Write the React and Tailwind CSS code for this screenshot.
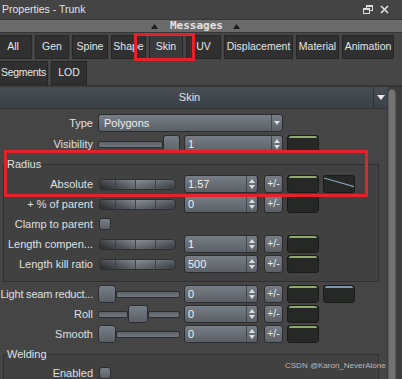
import React from 'react'

const metal = 'border border-[#2a2c2f] bg-linear-to-b from-[#787e85] to-[#5a6066]'

function Tri({ up, color = '#dde0e3', w = 7, h = 4 }) {
  return (
    <svg width={w} height={h} viewBox={`0 0 ${w} ${h}`} className="block shrink-0">
      <path d={up ? `M${w / 2} 0L${w} ${h}H0Z` : `M0 0H${w}L${w / 2} ${h}Z`} fill={color} />
    </svg>
  )
}

function Tab({ w, children, active }) {
  return (
    <div
      className={`flex h-[24px] shrink-0 items-center justify-center whitespace-nowrap border border-[#262626] text-[10.5px] text-[#e4e6e8] ${w} ${
        active ? 'bg-[#3a3a3a]' : 'bg-[#303030]'
      }`}
    >
      {children}
    </div>
  )
}

function Label({ inner, children }) {
  return (
    <div
      className={`flex shrink-0 justify-end whitespace-nowrap text-[11px] text-[#dfe0e1] ${
        inner ? 'w-[89px]' : 'w-[93px]'
      }`}
    >
      {children}
    </div>
  )
}

function NumField({ value, wide }) {
  return (
    <div className={`ml-[4px] flex h-[18px] shrink-0 rounded-[3px] ${metal} ${wide ? 'w-[99px]' : 'w-[74px]'}`}>
      <div className="flex-1 pl-[3px] text-[11px] leading-[16px] text-[#eeeeee]">{value}</div>
      <div className="flex w-[11px] flex-col items-center justify-center gap-[2px] border-l border-[#41464c]">
        <Tri up w={6} h={4} />
        <Tri w={6} h={4} />
      </div>
    </div>
  )
}

function PlusMinus() {
  return (
    <div className={`ml-[6px] flex h-[18px] w-[19px] shrink-0 items-center justify-center rounded-[3px] text-[10.5px] text-[#eeeeee] ${metal}`}>
      +/-
    </div>
  )
}

function Swatch({ top, curve }) {
  return (
    <div className="relative ml-[4px] h-[18px] w-[32px] shrink-0 overflow-hidden rounded-[3px] border border-[#1a1b1a] bg-[#262826]">
      {top && <div className={`mx-[1px] h-[2px] rounded-t-[2px] ${top}`} />}
      {curve && (
        <svg width="32" height="18" viewBox="0 0 32 18" className="absolute left-0 top-0">
          <line x1="0" y1="2" x2="31" y2="11" stroke="#8fa6bc" strokeWidth="1.2" />
        </svg>
      )}
    </div>
  )
}

function Segmented() {
  return (
    <div className="ml-[1px] flex h-[11px] w-[77px] overflow-hidden rounded-[4px] border border-[#2c2f33] bg-linear-to-r from-[#36393d] via-[#7e848b] to-[#4d5258]">
      <div className="w-[16px] border-r border-[#3d4146] bg-linear-to-b from-white/10 to-black/20" />
      <div className="w-[20px] border-r border-[#3d4146] bg-linear-to-b from-white/10 to-black/20" />
      <div className="w-[20px] border-r border-[#3d4146] bg-linear-to-b from-white/10 to-black/20" />
      <div className="flex-1 bg-linear-to-b from-white/10 to-black/20" />
    </div>
  )
}

function Track({ w }) {
  return <div className={`h-[7px] rounded-[2px] border border-[#2a2c2f] bg-linear-to-b from-[#5c6268] to-[#70767d] ${w}`} />
}

function Handle({ w }) {
  return <div className={`h-[18px] shrink-0 rounded-[3px] ${metal} ${w}`} />
}

function Check() {
  return <div className={`ml-[6px] h-[12px] w-[12px] rounded-[3px] ${metal}`} />
}

function SliderRow({ label, inner, slider, value, top, second }) {
  return (
    <div className="flex h-[20px] items-center">
      <Label inner={inner}>{label}</Label>
      <div className="ml-[5px] flex w-[82px] shrink-0 items-center">{slider}</div>
      <NumField value={value} />
      <PlusMinus />
      <Swatch top={top} />
      {second}
    </div>
  )
}

export default function App() {
  return (
    <div className="relative h-[379px] w-[402px] overflow-hidden bg-[#464646] font-['Liberation_Sans',Arial,sans-serif]">
      {/* title bar */}
      <div className="flex h-[19px] items-center bg-[#444444] pl-[2px] pr-[13px]">
        <span className="text-[10.5px] text-[#e2e2e2]">Properties - Trunk</span>
        <div className="ml-auto flex items-center gap-[7px]">
          <svg width="10" height="9" viewBox="0 0 10 9">
            <rect x="3.5" y="0.5" width="6" height="5" fill="none" stroke="#dcdcdc" />
            <rect x="3" y="0" width="7" height="2" fill="#dcdcdc" />
            <rect x="0.5" y="3.5" width="6" height="5" fill="#444" stroke="#dcdcdc" />
            <rect x="0" y="3" width="7" height="2" fill="#dcdcdc" />
          </svg>
          <svg width="9" height="9" viewBox="0 0 9 9">
            <path d="M1 1L8 8M8 1L1 8" stroke="#dcdcdc" strokeWidth="1.7" />
          </svg>
        </div>
      </div>

      {/* messages bar */}
      <div className="flex h-[14px] items-center border-y border-[#363636] bg-[#6b6b6b] pl-[151px]">
        <Tri up color="#1c1c1c" w={7} h={5} />
        <span className="ml-[12px] font-['DejaVu_Sans_Mono',monospace] text-[11px] font-bold leading-[12px] text-[#e2e2e2]">
          Messages
        </span>
        <div className="ml-[10px]">
          <Tri up color="#1c1c1c" w={7} h={5} />
        </div>
      </div>

      {/* tabs */}
      <div className="flex flex-col gap-[2px] pt-[2px]">
        <div className="flex gap-[3px]">
          <div className="-ml-[6px]">
            <Tab w="w-[38px]">All</Tab>
          </div>
          <Tab w="w-[34px]">Gen</Tab>
          <Tab w="w-[36px]">Spine</Tab>
          <Tab w="w-[35px]">Shape</Tab>
          <Tab w="w-[34px]" active>
            Skin
          </Tab>
          <Tab w="w-[35px]">UV</Tab>
          <Tab w="w-[69px]">Displacement</Tab>
          <Tab w="w-[43px]">Material</Tab>
          <Tab w="w-[52px]">Animation</Tab>
        </div>
        <div className="flex gap-[3px]">
          <div className="-ml-[1px]">
            <Tab w="w-[49px]">
              <span className="tracking-[-0.3px]">Segments</span>
            </Tab>
          </div>
          <Tab w="w-[36px]">LOD</Tab>
        </div>
      </div>
      <div className="h-[2px] bg-[#353535]" />

      <div className="flex">
        <div className="w-[387px] shrink-0 bg-[#454545]">
          {/* section header */}
          <div className="flex h-[22px] border-b border-[#333333]">
            <div className="flex flex-1 items-center justify-center bg-linear-to-b from-[#474d55] to-[#3c4148] pl-[6px] text-[11px] text-[#e2e2e2]">
              Skin
            </div>
            <div className="flex w-[14px] items-center justify-center border-l border-[#2d3136] bg-linear-to-b from-[#474d55] to-[#3c4148]">
              <Tri w={8} h={5} color="#e8e8e8" />
            </div>
          </div>

          {/* Type */}
          <div className="mt-[4px] flex h-[20px] items-center">
            <Label>Type</Label>
            <div className={`ml-[5px] flex h-[18px] w-[185px] rounded-[3px] ${metal}`}>
              <div className="flex-1 pl-[5px] text-[11px] leading-[16px] text-[#eeeeee]">Polygons</div>
              <div className="flex w-[11px] items-center justify-center border-l border-[#41464c]">
                <Tri w={6} h={4} />
              </div>
            </div>
          </div>

          {/* Visibility */}
          <div className="mt-[1px] flex h-[20px] items-center">
            <Label>Visibility</Label>
            <div className="ml-[5px] flex w-[82px] shrink-0 items-center">
              <Track w="w-[65px]" />
              <Handle w="w-[17px]" />
            </div>
            <NumField value="1" wide />
            <Swatch top="bg-[#90aa6c]" />
          </div>

          {/* Radius group */}
          <fieldset className="ml-[3px] mt-[3px] w-[376px] border border-[#303030] bg-[#414141] pb-[7px]">
            <legend className="ml-[3px] text-[11px] leading-[14px] text-[#dfe0e1]">Radius</legend>
            <div className="mt-[3px]">
              <SliderRow
                inner
                label="Absolute"
                slider={<Segmented />}
                value="1.57"
                top="bg-[#90aa6c]"
                second={<Swatch curve />}
              />
              <SliderRow inner label="+ % of parent" slider={<Segmented />} value="0" />
              <div className="flex h-[20px] items-center">
                <Label inner>Clamp to parent</Label>
                <Check />
              </div>
              <SliderRow inner label="Length compen..." slider={<Segmented />} value="1" top="bg-[#90aa6c]" />
              <SliderRow inner label="Length kill ratio" slider={<Segmented />} value="500" top="bg-[#90aa6c]" />
            </div>
          </fieldset>

          <div className="mt-[2px]">
            <SliderRow
              label={<span className="tracking-[-0.2px]">Light seam reduct...</span>}
              slider={
                <>
                  <Handle w="w-[18px]" />
                  <Track w="flex-1" />
                </>
              }
              value="0"
              top="bg-[#90aa6c]"
              second={<Swatch top="bg-[#8197ae]" />}
            />
            <SliderRow
              label="Roll"
              slider={
                <>
                  <Track w="w-[30px]" />
                  <Handle w="w-[20px]" />
                  <Track w="flex-1" />
                </>
              }
              value="0"
              top="bg-[#90aa6c]"
            />
            <SliderRow
              label="Smooth"
              slider={
                <>
                  <Handle w="w-[18px]" />
                  <Track w="flex-1" />
                </>
              }
              value="0"
              top="bg-[#90aa6c]"
            />
          </div>

          {/* Welding group */}
          <fieldset className="ml-[3px] mt-[3px] w-[376px] border border-[#303030] bg-[#414141] pb-[20px]">
            <legend className="ml-[3px] text-[11px] leading-[14px] text-[#dfe0e1]">Welding</legend>
            <div className="mt-[2px] flex h-[20px] items-center">
              <Label inner>Enabled</Label>
              <Check />
            </div>
          </fieldset>
        </div>

        {/* scrollbar */}
        <div className="flex-1 bg-[#3d3d3d]">
          <div className="ml-[1px] mt-[2px] h-[300px] w-[8px] rounded-t-[4px] border border-[#5a5a5a] bg-[#737373]" />
        </div>
      </div>

      {/* highlights */}
      <div className="absolute left-[134px] top-[33px] h-[28px] w-[61px] border-[3px] border-[#e52129]" />
      <div className="absolute left-[4px] top-[150px] h-[47px] w-[364px] border-[3px] border-[#e52129]" />

      <div className="absolute left-[285px] top-[360px] text-[8px] text-[#b9b9b9]">CSDN @Karon_NeverAlone</div>
    </div>
  )
}
